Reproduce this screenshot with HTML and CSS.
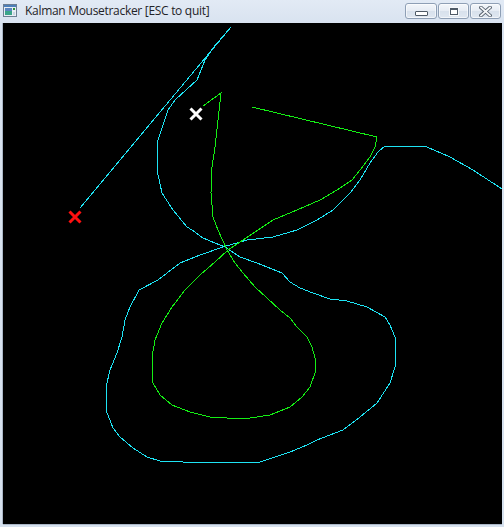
FILE: index.html
```html
<!DOCTYPE html>
<html>
<head>
<meta charset="utf-8">
<title>Kalman Mousetracker</title>
<link rel="stylesheet" href="styles.css">
</head>
<body>
<div class="window">
  <div class="titlebar">
    <svg class="app-icon" width="14" height="13" viewBox="0 0 14 13">
      <rect x="0.5" y="0.5" width="13" height="12" fill="#e8eef4" stroke="#6d7f93"/>
      <rect x="1" y="1" width="12" height="2" fill="#4d7fb8"/>
      <rect x="2" y="4" width="7" height="7" fill="#3aa58a"/>
      <rect x="2" y="4" width="7" height="3" fill="#5a86c0"/>
      <rect x="10" y="4" width="2" height="2" fill="#2f8f3a"/>
      <rect x="10" y="8" width="2" height="3" fill="#c9d6e3"/>
    </svg>
    <span class="title">Kalman Mousetracker [ESC to quit]</span>
    <div class="controls">
      <div class="btn btn-min"><span class="min-glyph"></span></div>
      <div class="btn btn-max"><span class="max-glyph"></span></div>
      <div class="btn btn-close">
        <svg width="13" height="11" viewBox="0 0 13 11">
          <path d="M2 1.5 L11 9.5 M11 1.5 L2 9.5" stroke="#55606d" stroke-width="3.6" stroke-linecap="square"/>
          <path d="M2 1.5 L11 9.5 M11 1.5 L2 9.5" stroke="#f4f6f8" stroke-width="1.8" stroke-linecap="square"/>
        </svg>
      </div>
    </div>
  </div>
  <div class="canvas">
    <svg class="plot" width="499" height="501" viewBox="3 23 499 501">
      <polyline class="trace-cyan" points="80,208 231,27 213,48 205,60 197,80 175,100 168,110 157,143 157,170 162,193 173,210 187,227 192,230 203,238 215,243 225,247 240,257 257,263 282,273 290,282 300,288 313,293 330,299 347,301 367,307 385,317 390,325 395,337 395,367 390,383 377,403 360,417 343,430 317,440 307,445 290,452 260,462 183,462 160,461 147,457 133,448 120,437 113,428 106,410 106,387 110,370 117,353 122,337 125,320 130,307 139,290 158,280 180,263 200,255 223,247 247,240 273,237 297,230 317,220 333,210 350,193 360,180 370,163 378,152 385,146 415,146 427,147 450,157 473,170 502,189"/>
      <polyline class="trace-green" points="203,106 221,93 218,120 215,147 212,167 211,193 213,217 218,230 227,250 235,263 243,273 255,287 267,298 280,310 290,318 297,327 307,337 312,347 315,358 315,373 310,387 302,397 290,407 270,415 250,418 227,418 210,417 190,412 172,405 160,395 153,383 152,357 155,340 162,323 172,307 185,290 200,275 215,262 228,250 243,240 258,230 273,220 297,210 320,200 337,190 352,180 360,170 370,157 375,147 377,137 252,107"/>
      <path class="mark-red" d="M69.5,211.5 L80.5,222.5 M80.5,211.5 L69.5,222.5"/>
      <path class="mark-white" d="M190.5,108.5 L201.5,119.5 M201.5,108.5 L190.5,119.5"/>
    </svg>
  </div>
</div>
</body>
</html>
```
FILE: styles.css
```css
html, body {
  margin: 0;
  padding: 0;
  width: 504px;
  height: 527px;
  overflow: hidden;
  background: #dae4f1;
}

.window {
  width: 504px;
  height: 527px;
  display: flex;
  flex-direction: column;
  background: linear-gradient(to bottom, #e2eaf5 0px, #d9e3f0 23px, #d6e1ee 100%);
}

.titlebar {
  height: 23px;
  display: flex;
  align-items: flex-start;
  padding-left: 3px;
  box-sizing: border-box;
}

.app-icon {
  margin-top: 4px;
  flex: none;
}

.title {
  margin-left: 8px;
  margin-top: 3px;
  font-family: "Open Sans", "Noto Sans", sans-serif;
  font-size: 12px;
  line-height: 16px;
  color: #1f2328;
  letter-spacing: -0.3px;
  white-space: nowrap;
}

.controls {
  margin-left: auto;
  margin-right: 3px;
  margin-top: 3px;
  display: flex;
  gap: 1px;
}

.btn {
  height: 16px;
  box-sizing: border-box;
  border: 1px solid #8e9fb5;
  border-radius: 3px;
  background: linear-gradient(to bottom, #f3f6fa 0%, #e6ecf4 50%, #d8e1ec 51%, #dfe7f1 100%);
  box-shadow: inset 0 0 0 1px rgba(255, 255, 255, 0.6);
  display: flex;
  align-items: center;
  justify-content: center;
}

.btn-min { width: 32px; }
.btn-max { width: 31px; }
.btn-close { width: 31px; }

.min-glyph {
  width: 11px;
  height: 3px;
  margin-top: 5px;
  border: 1px solid #4f5a66;
  border-radius: 1px;
  background: #ffffff;
}

.max-glyph {
  width: 6px;
  height: 4px;
  border: 1px solid #4f5a66;
  border-top-width: 2px;
  background: #ffffff;
  box-shadow: 0 0 0 1px #f6f8fa;
}

.canvas {
  width: 499px;
  height: 501px;
  margin-left: 3px;
  background: #000000;
  box-shadow: -1px 0 0 #aab6c6, 0 1px 0 #aab6c6;
}

.plot {
  display: block;
}

.trace-cyan {
  fill: none;
  stroke: #1ee4f4;
  stroke-width: 1;
  shape-rendering: crispEdges;
}

.trace-green {
  fill: none;
  stroke: #14ee14;
  stroke-width: 1;
  shape-rendering: crispEdges;
}

.mark-red {
  stroke: #ff1010;
  stroke-width: 3;
  fill: none;
}

.mark-white {
  stroke: #ffffff;
  stroke-width: 3;
  fill: none;
}
```
